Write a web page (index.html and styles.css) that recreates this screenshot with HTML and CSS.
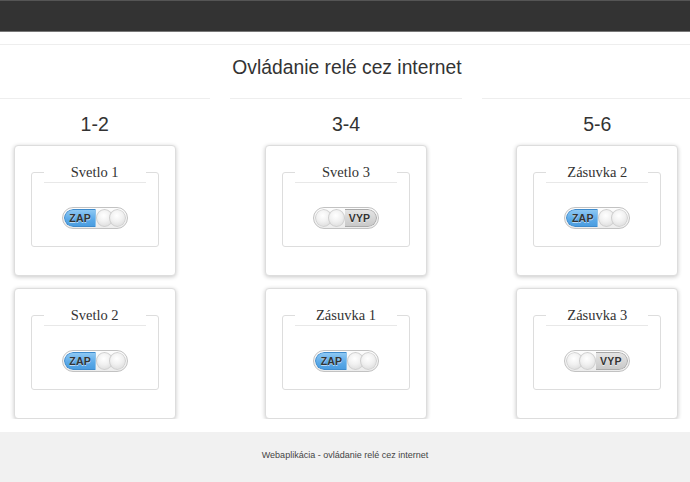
FILE: index.html
```html
<!DOCTYPE html>
<html lang="sk">
<head>
<meta charset="utf-8">
<title>Ovládanie relé cez internet</title>
<link rel="stylesheet" href="styles.css">
</head>
<body>
<nav class="navbar"></nav>
<main class="main">
  <hr class="rule">
  <h1 class="title">Ovládanie relé cez internet</h1>
  <div class="row">
    <section class="col">
      <hr class="rule">
      <h2 class="group">1-2</h2>
      <div class="card">
        <fieldset class="box">
          <legend class="label">Svetlo 1</legend>
          <div class="switch on"><div class="track"><span class="state">ZAP</span><span class="knob"><i></i><i></i></span></div></div>
        </fieldset>
      </div>
      <div class="card">
        <fieldset class="box">
          <legend class="label">Svetlo 2</legend>
          <div class="switch on"><div class="track"><span class="state">ZAP</span><span class="knob"><i></i><i></i></span></div></div>
        </fieldset>
      </div>
    </section>
    <section class="col">
      <hr class="rule">
      <h2 class="group">3-4</h2>
      <div class="card">
        <fieldset class="box">
          <legend class="label">Svetlo 3</legend>
          <div class="switch off"><div class="track"><span class="knob"><i></i><i></i></span><span class="state">VYP</span></div></div>
        </fieldset>
      </div>
      <div class="card">
        <fieldset class="box">
          <legend class="label">Zásuvka 1</legend>
          <div class="switch on"><div class="track"><span class="state">ZAP</span><span class="knob"><i></i><i></i></span></div></div>
        </fieldset>
      </div>
    </section>
    <section class="col">
      <hr class="rule">
      <h2 class="group">5-6</h2>
      <div class="card">
        <fieldset class="box">
          <legend class="label">Zásuvka 2</legend>
          <div class="switch on"><div class="track"><span class="state">ZAP</span><span class="knob"><i></i><i></i></span></div></div>
        </fieldset>
      </div>
      <div class="card">
        <fieldset class="box">
          <legend class="label">Zásuvka 3</legend>
          <div class="switch off"><div class="track"><span class="knob"><i></i><i></i></span><span class="state">VYP</span></div></div>
        </fieldset>
      </div>
    </section>
  </div>
</main>
<footer class="footer">Webaplikácia - ovládanie relé cez internet</footer>
</body>
</html>
```
FILE: styles.css
```css
html, body {
  margin: 0;
  padding: 0;
  overflow: hidden;
}
body {
  font-family: "Liberation Sans", Arial, sans-serif;
  color: #333;
  background: #fff;
}
.navbar {
  display: block;
  height: 30px;
  background: #333;
  border-top: 1px solid #555;
  border-bottom: 1px solid #777;
}
.main {
  height: 387px;
  overflow: hidden;
}
.rule {
  margin: 0;
  border: 0;
  border-top: 1px solid #eee;
  height: 0;
}
.main > .rule {
  margin-top: 12px;
}
.title {
  margin: 11px 0 18px;
  font-size: 19.3px;
  line-height: 24px;
  font-weight: normal;
  text-align: center;
  padding-left: 4px;
}
.row {
  display: grid;
  grid-template-columns: repeat(3, 1fr);
  width: 754px;
  margin-left: -31px;
}
.col {
  padding: 0 10px;
}
.group {
  margin: 13px 0 9px;
  font-size: 19.5px;
  line-height: 24px;
  font-weight: normal;
  text-align: center;
}
.card {
  width: 162px;
  box-sizing: border-box;
  margin: 0 auto 12px;
  background: #fff;
  border: 1px solid #ddd;
  border-radius: 4px;
  box-shadow: 0 1px 4px rgba(0, 0, 0, 0.22);
  padding: 16px 16px 28px;
}
.box {
  margin: 0;
  padding: 24px 0 17px;
  border: 1px solid #ddd;
  border-radius: 3px;
  min-width: 0;
}
.label {
  display: block;
  width: 102px;
  box-sizing: border-box;
  margin: 0 auto;
  padding: 0;
  font-family: "Liberation Serif", "Times New Roman", serif;
  font-size: 14.5px;
  line-height: 20px;
  color: #333;
  text-align: center;
  border-bottom: 1px solid #e8e8e8;
}
.switch {
  width: 66px;
  height: 22px;
  margin: 0 auto;
  box-sizing: border-box;
  border: 1px solid #c2c2c2;
  border-radius: 11px;
  background: linear-gradient(#fdfdfd, #ececec);
  padding: 1px;
}
.track {
  display: flex;
  height: 100%;
  border-radius: 9px;
  overflow: hidden;
}
.state {
  flex: 1;
  display: flex;
  align-items: center;
  justify-content: center;
  font-size: 10.5px;
  font-weight: bold;
  color: #333;
  text-shadow: 0 1px 0 rgba(255, 255, 255, 0.6);
  letter-spacing: 0.2px;
}
.on .state {
  background: linear-gradient(#8ec8f3, #5aa9e8 60%, #4b9de0);
  border: 1px solid #3f8bcc;
  border-right: 0;
  border-radius: 9px 0 0 9px;
  padding-left: 1px;
}
.off .state {
  background: linear-gradient(#e4e4e4, #c9c9c9);
  border: 1px solid #aaa;
  border-left: 0;
  border-radius: 0 9px 9px 0;
  padding-right: 2px;
}
.knob {
  display: flex;
  width: 30px;
  height: 100%;
  flex: none;
}
.knob i {
  display: block;
  width: 17px;
  height: 18px;
  box-sizing: border-box;
  border-radius: 50%;
  background: radial-gradient(circle at 45% 35%, #ffffff 0%, #f1f1f1 45%, #d6d6d6 100%);
  border: 1px solid #cfcfcf;
}
.knob i + i {
  margin-left: -4px;
}
.on .knob {
  border-left: 1px solid #8ec2ea;
}
.footer {
  margin-top: 13px;
  height: 50px;
  box-sizing: border-box;
  padding-top: 17px;
  background: #f1f1f1;
  font-size: 9px;
  line-height: 13px;
  color: #444;
  text-align: center;
}
```
